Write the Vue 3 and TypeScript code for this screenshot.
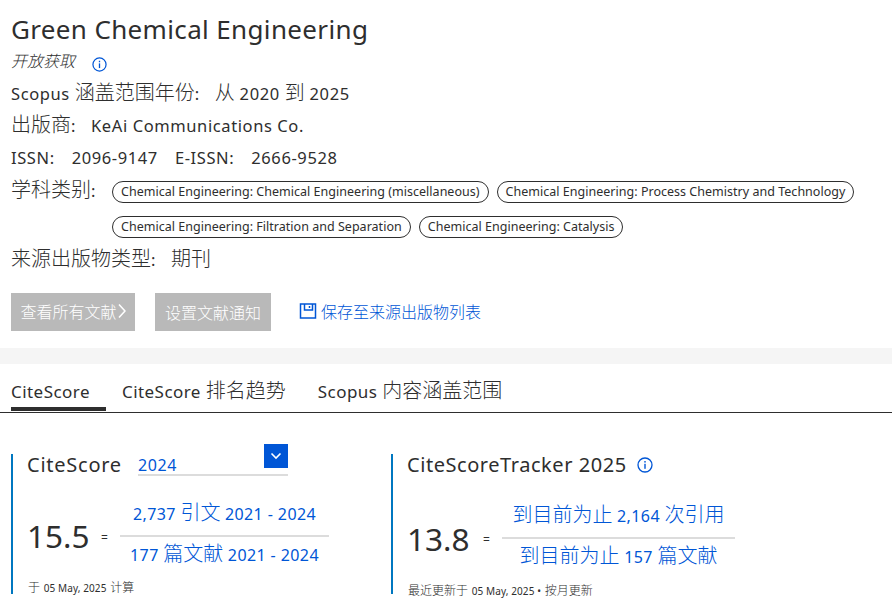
<script setup lang="ts">
const row1 = ['Chemical Engineering: Chemical Engineering (miscellaneous)', 'Chemical Engineering: Process Chemistry and Technology']
const row2 = ['Chemical Engineering: Filtration and Separation', 'Chemical Engineering: Catalysis']
</script>

<template>
  <div class="page">
    <section class="head">
      <h1>Green Chemical Engineering</h1>
      <div class="oa"><em>开放获取</em>
        <svg class="info" width="16" height="16" viewBox="0 0 16 16"><circle cx="8" cy="8" r="7" fill="none" stroke="#0056d6" stroke-width="1.3"/><rect x="7.3" y="6.8" width="1.4" height="5" fill="#0056d6"/><rect x="7.3" y="4" width="1.4" height="1.6" fill="#0056d6"/></svg>
      </div>
      <div class="line l1">Scopus <span class="c">涵盖范围年份</span>:<span class="val"><span class="c">从</span> 2020 <span class="c">到</span> 2025</span></div>
      <div class="line"><span class="c">出版商</span>:<span class="val">KeAi Communications Co.</span></div>
      <div class="line issn">ISSN:<span class="val">2096-9147</span><span class="val">E-ISSN:</span><span class="val">2666-9528</span></div>
      <div class="subjects">
        <span class="label"><span class="c">学科类别</span>:</span>
        <div class="chips">
          <div class="chip-row"><span v-for="c in row1" :key="c" class="chip">{{ c }}</span></div>
          <div class="chip-row"><span v-for="c in row2" :key="c" class="chip">{{ c }}</span></div>
        </div>
      </div>
      <div class="line type"><span class="c">来源出版物类型</span>:<span class="val"><span class="c">期刊</span></span></div>
      <div class="actions">
        <button class="btn b1"><span>查看所有文献</span><svg width="9" height="16" viewBox="0 0 9 16" fill="none" stroke="#fff" stroke-width="1.6"><path d="M2 1.5 8 8l-6 6.500"/></svg></button>
        <button class="btn b2">设置文献通知</button>
        <a class="save">
          <svg width="18" height="18" viewBox="0 0 18 18" fill="none" stroke="#0056d6" stroke-width="1.5"><path d="M1.500 2h15v14h-15z"/><path d="M5.500 2v6h8V2"/><path d="M10.500 4v2"/></svg>
          保存至来源出版物列表
        </a>
      </div>
    </section>
    <div class="band"></div>
    <nav class="tabs">
      <span class="tab active">CiteScore</span>
      <span class="tab">CiteScore <span class="c">排名趋势</span></span>
      <span class="tab">Scopus <span class="c">内容涵盖范围</span></span>
    </nav>
    <section class="metrics">
      <div class="metric m1">
        <div class="mhead">
          <span class="mtitle">CiteScore</span>
          <div class="year"><span>2024</span><span class="sel"><svg width="12" height="8" viewBox="0 0 12 8" fill="none" stroke="#fff" stroke-width="1.6"><path d="M1.500 1.500 6 6l4.500-4.500"/></svg></span></div>
        </div>
        <div class="formula">
          <span class="score">15.5</span><span class="eq">=</span>
          <div class="frac">
            <div class="num">2,737 <span class="c">引文</span> 2021 - 2024</div>
            <div class="den">177 <span class="c">篇文献</span> 2021 - 2024</div>
          </div>
        </div>
        <div class="foot"><span class="f">于</span> 05 May, 2025 <span class="f">计算</span></div>
      </div>
      <div class="metric m2">
        <div class="mhead">
          <span class="mtitle">CiteScoreTracker 2025</span>
          <svg class="info2" width="16" height="16" viewBox="0 0 16 16"><circle cx="8" cy="8" r="7" fill="none" stroke="#0056d6" stroke-width="1.3"/><rect x="7.3" y="6.8" width="1.4" height="5" fill="#0056d6"/><rect x="7.3" y="4" width="1.4" height="1.6" fill="#0056d6"/></svg>
        </div>
        <div class="formula">
          <span class="score">13.8</span><span class="eq">=</span>
          <div class="frac">
            <div class="num"><span class="c">到目前为止</span> 2,164 <span class="c">次引用</span></div>
            <div class="den"><span class="c">到目前为止</span> 157 <span class="c">篇文献</span></div>
          </div>
        </div>
        <div class="foot"><span class="f">最近更新于</span> 05 May, 2025 • <span class="f">按月更新</span></div>
      </div>
    </section>
  </div>
</template>

<style>
html, body { margin: 0; overflow: hidden; background: #fff; }
</style>

<style scoped>
.page { width: 892px; height: 604px; overflow: hidden; font-family: "Noto Sans", "Noto Sans CJK SC", sans-serif; color: #2e2e2e; font-size: 16.5px; letter-spacing: .6px; }
.c { font-size: 20px; font-weight: 300; letter-spacing: 0; font-family: "Noto Sans CJK SC", sans-serif; line-height: 1; }
.f { font-size: 12px; font-weight: 300; letter-spacing: 0; margin: 0 1px; font-family: "Noto Sans CJK SC", sans-serif; }
.head { padding: 11px 11px 0; height: 348px; box-sizing: border-box; }
h1 { margin: 0; font-size: 26px; font-weight: 400; line-height: 37px; height: 37px; letter-spacing: .35px; }
.oa { display: flex; align-items: center; gap: 17px; height: 24px; font-size: 16px; font-weight: 300; letter-spacing: 0; }
.info { margin-top: 8px; width: 15px; height: 15px; }
.line { line-height: 32px; height: 32px; white-space: nowrap; }
.l1 { margin-top: 6px; }
.val { margin-left: 15px; }
.issn .val { margin-left: 17px; }
.subjects { display: flex; height: 69px; }
.label { line-height: 34px; width: 101px; flex: none; }
.type { line-height: 34px; }
.chip-row { display: flex; gap: 8px; height: 35px; align-items: flex-start; }
.chips { padding-top: 7px; }
.chip { border: 1px solid #2e2e2e; border-radius: 11px; font-size: 12.5px; letter-spacing: .02px; line-height: 20px; padding: 0 8px; white-space: nowrap; }
.actions { display: flex; align-items: center; margin-top: 18px; }
.btn { background: #b9b9b9; color: #fff; border: 0; height: 38px; font: inherit; font-size: 16px; letter-spacing: 0; font-weight: 300; padding: 0 0 3px; box-sizing: border-box; font-family: "Noto Sans CJK SC", sans-serif; display: flex; align-items: center; justify-content: center; }
.b1 { width: 124px; margin-right: 20px; }
.b2 { width: 116px; margin-right: 28px; padding-bottom: 1px; }
.save { display: flex; align-items: center; gap: 4px; color: #0056d6; font-size: 16px; letter-spacing: 0; font-weight: 300; margin-top: -2px; }
.band { height: 16px; background: #f5f5f5; }
.tabs { display: flex; gap: 16px; height: 49px; border-bottom: 1px solid #2e2e2e; padding-left: 11px; align-items: flex-start; box-sizing: border-box; }
.tab { font-size: 17px; height: 47px; line-height: 32px; padding: 12px 16px 0 0; box-sizing: border-box; border-bottom: 4px solid transparent; white-space: nowrap; letter-spacing: .45px; }
.active { border-bottom-color: #2e2e2e; }
.metrics { display: flex; padding: 41px 0 0 11px; }
.metric { border-left: 2px solid #0077c0; padding-left: 14px; height: 140px; box-sizing: border-box; }
.m1 { width: 380px; }
.mhead { display: flex; align-items: center; gap: 16px; height: 22px; }
.m2 .mhead { gap: 10px; }
.mtitle { font-size: 20px; letter-spacing: .55px; line-height: 22px; white-space: nowrap; }
.m1 .mtitle { letter-spacing: .75px; }
.year { position: relative; width: 150px; height: 22px; box-sizing: content-box; border-bottom: 2px solid #dcdcdc; color: #0056d6; font-size: 16px; line-height: 26px; margin-top: -2px; }
.sel { position: absolute; right: 0; top: -8px; background: #0056d6; width: 24px; height: 24px; display: flex; align-items: center; justify-content: center; }
.formula { display: flex; align-items: flex-start; margin-top: 18px; }
.m2 .formula { margin-top: 20px; }
.score { font-size: 31.5px; line-height: 40px; width: 74px; margin-top: 22px; letter-spacing: 0; }
.m2 .score { width: 76px; margin-top: 23px; }
.eq { width: 19px; font-size: 12px; line-height: 40px; margin-top: 24px; }
.m2 .eq { margin-top: 24px; }
.frac { width: 209px; text-align: center; color: #0056d6; font-size: 16px; letter-spacing: .4px; white-space: nowrap; }
.m2 .frac { width: 233px; }
.num { height: 41px; line-height: 40px; border-bottom: 2px solid #dcdcdc; }
.den { line-height: 36px; }
.foot { font-size: 10px; letter-spacing: .1px; line-height: 18px; margin-top: 5px; white-space: nowrap; }
.m2 .foot { margin-top: 6px; }
</style>
